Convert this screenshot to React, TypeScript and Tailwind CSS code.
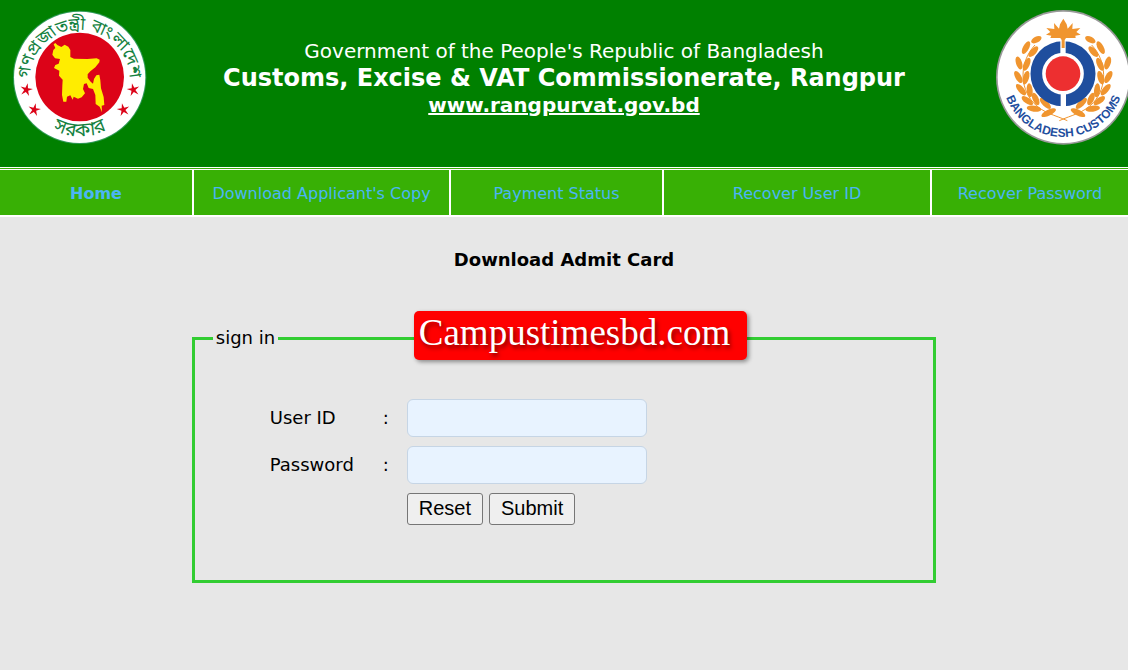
import React from "react";

const navLinks = [
  { label: "Home", active: true },
  { label: "Download Applicant's Copy" },
  { label: "Payment Status" },
  { label: "Recover User ID" },
  { label: "Recover Password" },
];

// left half of the wreath: x, y, angle, length
const leaves = [
  [169, 119, -28, 17],
  [138, 143, -62, 21],
  [160, 155, -48, 20],
  [117, 189, 72, 20],
  [140, 193, -66, 21],
  [115, 231, 60, 20],
  [138, 233, -74, 21],
  [123, 269, 50, 21],
  [149, 271, 84, 21],
  [142, 302, 35, 20],
  [167, 297, 66, 20],
  [162, 326, 8, 22],
  [196, 310, 45, 22],
  [206, 338, -26, 24],
];

const stars = [
  [79, 270],
  [103, 330],
  [400, 270],
  [370, 330],
];

function GovernmentSeal() {
  return (
    <svg viewBox="36 31 405 405" className="size-[135px]" role="img">
      <circle cx="239" cy="233" r="200" fill="#2f9a58" />
      <circle cx="239" cy="233" r="197" fill="#fff" />
      <circle cx="239" cy="232" r="133" fill="#dc0318" />
      <path
        fill="#ffed00"
        d="M166 130 L172 136 L184 142 L194 135 L205 141 L211 151 L211 172 L222 177 L262 178 L290 176 L299 180 L298 188 L286 203 L271 215 L263 224 L263 234 L272 246 L279 252 L282 238 L289 227 L298 225 L301 242 L303 266 L311 292 L313 316 L305 318 L306 338 L299 321 L287 313 L286 286 L279 268 L266 265 L260 251 L252 253 L249 268 L255 281 L245 293 L234 297 L221 291 L218 300 L211 287 L201 291 L199 306 L190 306 L186 286 L187 258 L188 240 L177 228 L178 213 L162 205 L166 196 L176 192 L180 178 L165 176 L157 165 L160 151 L166 145 L161 134 Z"
      />
      {stars.map(([x, y]) => (
        <path
          key={`${x}-${y}`}
          transform={`translate(${x} ${y}) rotate(${x < 239 ? 12 : -12})`}
          fill="#dc0318"
          d="M0 -20 L4 -5 L19 -6 L6 2 L12 17 L0 7 L-12 17 L-6 2 L-19 -6 L-4 -5 Z"
        />
      ))}
      <path id="sealTop" d="M91 265 A150 150 0 1 1 387 265" fill="none" />
      <path id="sealBottom" d="M62 233 A177 177 0 0 0 416 233" fill="none" />
      <g fill="#14813f" className="font-['Noto_Sans_Bengali','Noto_Sans',sans-serif]">
        <text textAnchor="middle" fontSize="52">
          <textPath href="#sealTop" startOffset="50%">গণপ্রজাতন্ত্রী বাংলাদেশ</textPath>
        </text>
        <text textAnchor="middle" fontSize="58">
          <textPath href="#sealBottom" startOffset="50%">সরকার</textPath>
        </text>
      </g>
    </svg>
  );
}

function WreathHalf() {
  return (
    <g>
      <path d="M165 135 C118 185 118 262 160 308 C190 340 225 345 262 362" fill="none" stroke="#f0952f" strokeWidth="3" />
      {leaves.map(([x, y, angle, length]) => (
        <ellipse key={`${x}-${y}`} rx={length} ry="9" fill="#f0952f" transform={`translate(${x} ${y}) rotate(${angle})`} />
      ))}
    </g>
  );
}

function CustomsSeal() {
  return (
    <svg viewBox="48 30 408 408" className="size-[136px]" role="img">
      <circle cx="250" cy="232" r="202" fill="#999" />
      <circle cx="250" cy="232" r="197" fill="#fff" />
      <WreathHalf />
      <g transform="translate(500 0) scale(-1 1)">
        <WreathHalf />
      </g>
      <circle cx="249" cy="221" r="80" fill="none" stroke="#1f4e9e" strokeWidth="35" />
      <path d="M249 120 V165 M250 278 V322" stroke="#fff" strokeWidth="16" />
      <circle cx="249" cy="221" r="52" fill="#ed2f30" />
      <path
        fill="#f0952f"
        d="M250 56 L260 73 L263 86 L278 69 L277 87 L301 84 L289 96 L302 104 L286 107 L287 114 L258 114 L254 120 V144 H245 V120 L241 114 L211 114 L214 107 L198 104 L211 96 L199 84 L223 87 L222 69 L237 86 L240 73 Z"
      />
      <path id="customsArc" d="M67 228 A183 183 0 0 0 433 228" fill="none" />
      <text textAnchor="middle" fontSize="36" fill="#1f4e9e" className="font-['Liberation_Sans',sans-serif] font-bold">
        <textPath href="#customsArc" startOffset="50%">BANGLADESH CUSTOMS</textPath>
      </text>
    </svg>
  );
}

function Header() {
  return (
    <header className="grid h-[167px] grid-cols-[1fr_auto_1fr] overflow-hidden bg-[#008000] pt-2.5">
      <div className="pl-3">
        <GovernmentSeal />
      </div>
      <div className="pt-7 text-center text-xl leading-[27px] text-white">
        <p>Government of the People's Republic of Bangladesh</p>
        <h1 className="text-2xl leading-[27px] font-bold">Customs, Excise &amp; VAT Commissionerate, Rangpur</h1>
        <a href="#" className="font-bold underline">www.rangpurvat.gov.bd</a>
      </div>
      <div className="-mr-1 justify-self-end">
        <CustomsSeal />
      </div>
    </header>
  );
}

function Navigation() {
  return (
    <div className="border-t border-white bg-[#38b005] pt-px">
      <nav className="grid grid-cols-[192fr_257fr_213fr_268fr_198fr] border-t border-b-2 border-white">
        {navLinks.map((link) => (
          <a
            key={link.label}
            href="#"
            className={`border-l-2 border-white pt-0.5 text-center leading-[43px] whitespace-nowrap text-[#4bb5f5] first:border-l-0 ${
              link.active ? "font-bold" : ""
            }`}
          >
            {link.label}
          </a>
        ))}
      </nav>
    </div>
  );
}

function SignInForm() {
  const fieldClass = "h-[38px] w-60 rounded-md border border-[#c6d5e5] bg-[#e8f3ff] px-2 outline-none";
  const buttonClass =
    "h-8 rounded-[3px] border border-[#767676] bg-[#efefef] px-[11px] pb-0.5 font-['Liberation_Sans',sans-serif] text-xl leading-7";

  return (
    <form className="relative mx-auto w-[66%]" onSubmit={(e) => e.preventDefault()}>
      <fieldset className="border-[3px] border-[#32cd32] px-[18px] pb-[55px]">
        <legend className="px-[3px] leading-6">sign in</legend>
        <div className="grid grid-cols-[113px_24px_auto] items-center justify-start gap-y-[9px] pt-[49px] pl-[57px]">
          <label htmlFor="user">User ID</label>
          <span>:</span>
          <input id="user" type="text" className={fieldClass} />
          <label htmlFor="password">Password</label>
          <span>:</span>
          <input id="password" type="password" className={fieldClass} />
          <div className="col-start-3 flex gap-1.5">
            <button type="reset" className={buttonClass}>Reset</button>
            <button type="submit" className={buttonClass}>Submit</button>
          </div>
        </div>
      </fieldset>

      {/* Site stamp */}
      <div className="absolute -top-[15px] left-[222px] h-[49px] w-[333px] rounded-[5px] bg-[#ff0000] pl-[5px] font-['Liberation_Serif',serif] text-[37px] leading-[43px] text-white shadow-[2px_2px_4px_rgba(0,0,0,0.4)] text-shadow-[2px_3px_4px_rgba(0,0,0,0.5)]">
        Campustimesbd.com
      </div>
    </form>
  );
}

export default function App() {
  return (
    <div className="min-h-screen bg-[#e7e7e7] font-['DejaVu_Sans',Verdana,sans-serif] text-black">
      <Header />
      <Navigation />
      <main className="pt-[31px] text-lg">
        <h2 className="mb-[54px] text-center leading-6 font-bold">Download Admit Card</h2>
        <SignInForm />
      </main>
    </div>
  );
}
